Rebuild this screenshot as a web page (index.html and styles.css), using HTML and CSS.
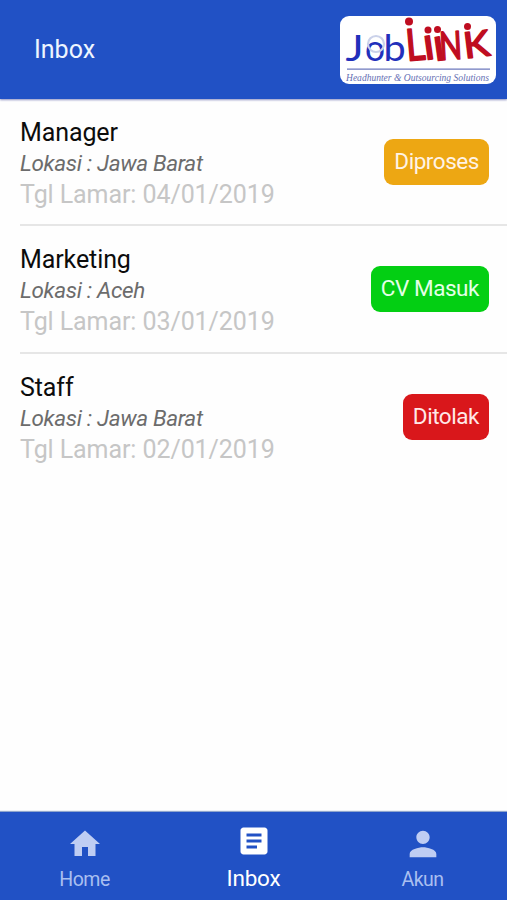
FILE: index.html
```html
<!DOCTYPE html>
<html lang="id">
<head>
<meta charset="utf-8">
<title>Inbox</title>
<link rel="stylesheet" href="styles.css">
</head>
<body>
<div class="app">
  <header class="header">
    <h1 class="title">Inbox</h1>
    <svg class="logo" width="156" height="68" viewBox="0 0 156 68" role="img" aria-label="JobLiiNK">
      <rect width="156" height="68" rx="9" fill="#fff"/>
      <g class="logo-job">
        <text transform="translate(5.500 45) scale(1.2 1)" font-size="36">J</text>
        <text transform="translate(25 45) scale(.98 1)" font-size="36">o</text>
        <text transform="translate(43.500 45) scale(1.1 1)" font-size="36">b</text>
      </g>
      <circle cx="36" cy="28" r="8" fill="none" stroke="#cbd2ea" stroke-width="2.200"/>
      <g class="logo-link">
        <text transform="translate(67 45) rotate(-5) scale(.85 1)" font-size="44">L</text>
        <text transform="translate(85 44) rotate(-8)" font-size="46">ı</text>
        <text transform="translate(95 45) rotate(-8)" font-size="46">ı</text>
        <text transform="translate(100 44) rotate(-3) scale(.76 1)" font-size="39">N</text>
        <text transform="translate(125 42.500) rotate(-7) scale(1.100 1)" font-size="36">K</text>
        <circle cx="69" cy="5.500" r="4"/>
        <circle cx="88" cy="14" r="3.500"/>
        <circle cx="97.500" cy="13.500" r="3.500"/>
        <circle cx="127.500" cy="10.500" r="3.500"/>
      </g>
      <path d="M7 53.200H150" stroke="#6c78bd" stroke-width="1.300"/>
      <text class="logo-tag" x="6" y="64.500" font-size="11" textLength="143" lengthAdjust="spacingAndGlyphs">Headhunter &amp; Outsourcing Solutions</text>
    </svg>
  </header>

  <main class="list">
    <article class="item">
      <div class="info">
        <h2 class="job">Manager</h2>
        <p class="place">Lokasi : Jawa Barat</p>
        <p class="date">Tgl Lamar: 04/01/2019</p>
      </div>
      <span class="badge badge-process">Diproses</span>
    </article>
    <article class="item">
      <div class="info">
        <h2 class="job">Marketing</h2>
        <p class="place">Lokasi : Aceh</p>
        <p class="date">Tgl Lamar: 03/01/2019</p>
      </div>
      <span class="badge badge-received">CV Masuk</span>
    </article>
    <article class="item">
      <div class="info">
        <h2 class="job">Staff</h2>
        <p class="place">Lokasi : Jawa Barat</p>
        <p class="date">Tgl Lamar: 02/01/2019</p>
      </div>
      <span class="badge badge-rejected">Ditolak</span>
    </article>
  </main>

  <nav class="tabs">
    <a class="tab">
      <svg class="icon" viewBox="0 0 24 24"><path d="M10 20v-6h4v6h5v-8h3L12 3 2 12h3v8z"/></svg>
      <span>Home</span>
    </a>
    <a class="tab tab-active">
      <svg class="icon" viewBox="0 0 24 24"><path d="M19 3H5c-1.100 0-2 .9-2 2v14c0 1.100.9 2 2 2h14c1.100 0 2-.9 2-2V5c0-1.100-.9-2-2-2zm-5 14H7v-2h7v2zm3-4H7v-2h10v2zm0-4H7V7h10v2z"/></svg>
      <span>Inbox</span>
    </a>
    <a class="tab">
      <svg class="icon" viewBox="1.200 1.200 21.600 21.600"><path d="M12 12c2.210 0 4-1.790 4-4s-1.790-4-4-4-4 1.790-4 4 1.790 4 4 4zm0 2c-2.670 0-8 1.340-8 4v2h16v-2c0-2.660-5.330-4-8-4z"/></svg>
      <span>Akun</span>
    </a>
  </nav>
</div>
</body>
</html>
```
FILE: styles.css
```css
* { box-sizing: border-box; margin: 0; }

body {
  background: #fefefe;
  font-family: Roboto, sans-serif;
}

.app {
  display: flex;
  flex-direction: column;
  height: 900px;
}

.header {
  display: flex;
  align-items: center;
  justify-content: space-between;
  height: 99px;
  padding: 0 11px 0 34px;
  background: #2151c5;
  box-shadow: 0 1px 2px #8b8fc0;
}

.title {
  color: #eef5ff;
  font-size: 25px;
  font-weight: 400;
}

.logo { display: block; overflow: visible; }
.logo-job { fill: #2230bb; font-family: Lato, sans-serif; }
.logo-link {
  fill: #bf0d20;
  font-family: Lato, sans-serif;
}
.logo-link text {
  stroke: #bf0d20;
  stroke-width: 1.600px;
  stroke-linejoin: round;
}
.logo-tag { fill: #6670b4; font-family: "Liberation Serif", serif; font-style: italic; }

.list { flex: 1; padding-left: 20px; }

.item {
  display: flex;
  align-items: center;
  justify-content: space-between;
  height: 127.500px;
  padding: 0 18px 0 0;
  border-bottom: 2px solid #e6e6e6;
}
.item:first-child { height: 127px; }
.item:last-child { height: 128.500px; border-bottom-color: transparent; }

.info { padding-top: 3px; }

.job, .place, .date {
  line-height: 31px;
  font-weight: 400;
  white-space: nowrap;
}
.job { color: #0c0c0c; font-size: 25px; letter-spacing: -.1px; }
.place { color: #6c6c6c; font-size: 22.500px; font-style: italic; letter-spacing: -.35px; }
.date { color: #c6c6c6; font-size: 25px; letter-spacing: -.08px; }

.badge {
  height: 46px;
  padding: 0 10px;
  border-radius: 9px;
  color: #fff3e6;
  font-size: 22.500px;
  line-height: 45px;
  letter-spacing: -.45px;
  white-space: nowrap;
}
.badge-process { background: #eda713; }
.badge-received { background: #03cf13; color: #e4ffe6; }
.badge-rejected { background: #d9171b; color: #ffe8e8; }

.tabs {
  display: grid;
  grid-template-columns: repeat(3, 1fr);
  height: 88px;
  background: #2151c5;
  box-shadow: 0 -1px 1px #8fa5cd;
}

.tab {
  display: flex;
  flex-direction: column;
  align-items: center;
  padding-top: 14px;
  color: #a9bff0;
  font-size: 19.500px;
  line-height: 24px;
  letter-spacing: -.5px;
}
.tab span { margin-top: 6px; }
.tab-active { padding-top: 11px; color: #fff; font-size: 22.500px; letter-spacing: -.2px; }
.tab-active span { margin-top: 7px; }
.icon { width: 36px; height: 36px; fill: #bfcdf3; }
.tab-active .icon { fill: #fff; }
```
